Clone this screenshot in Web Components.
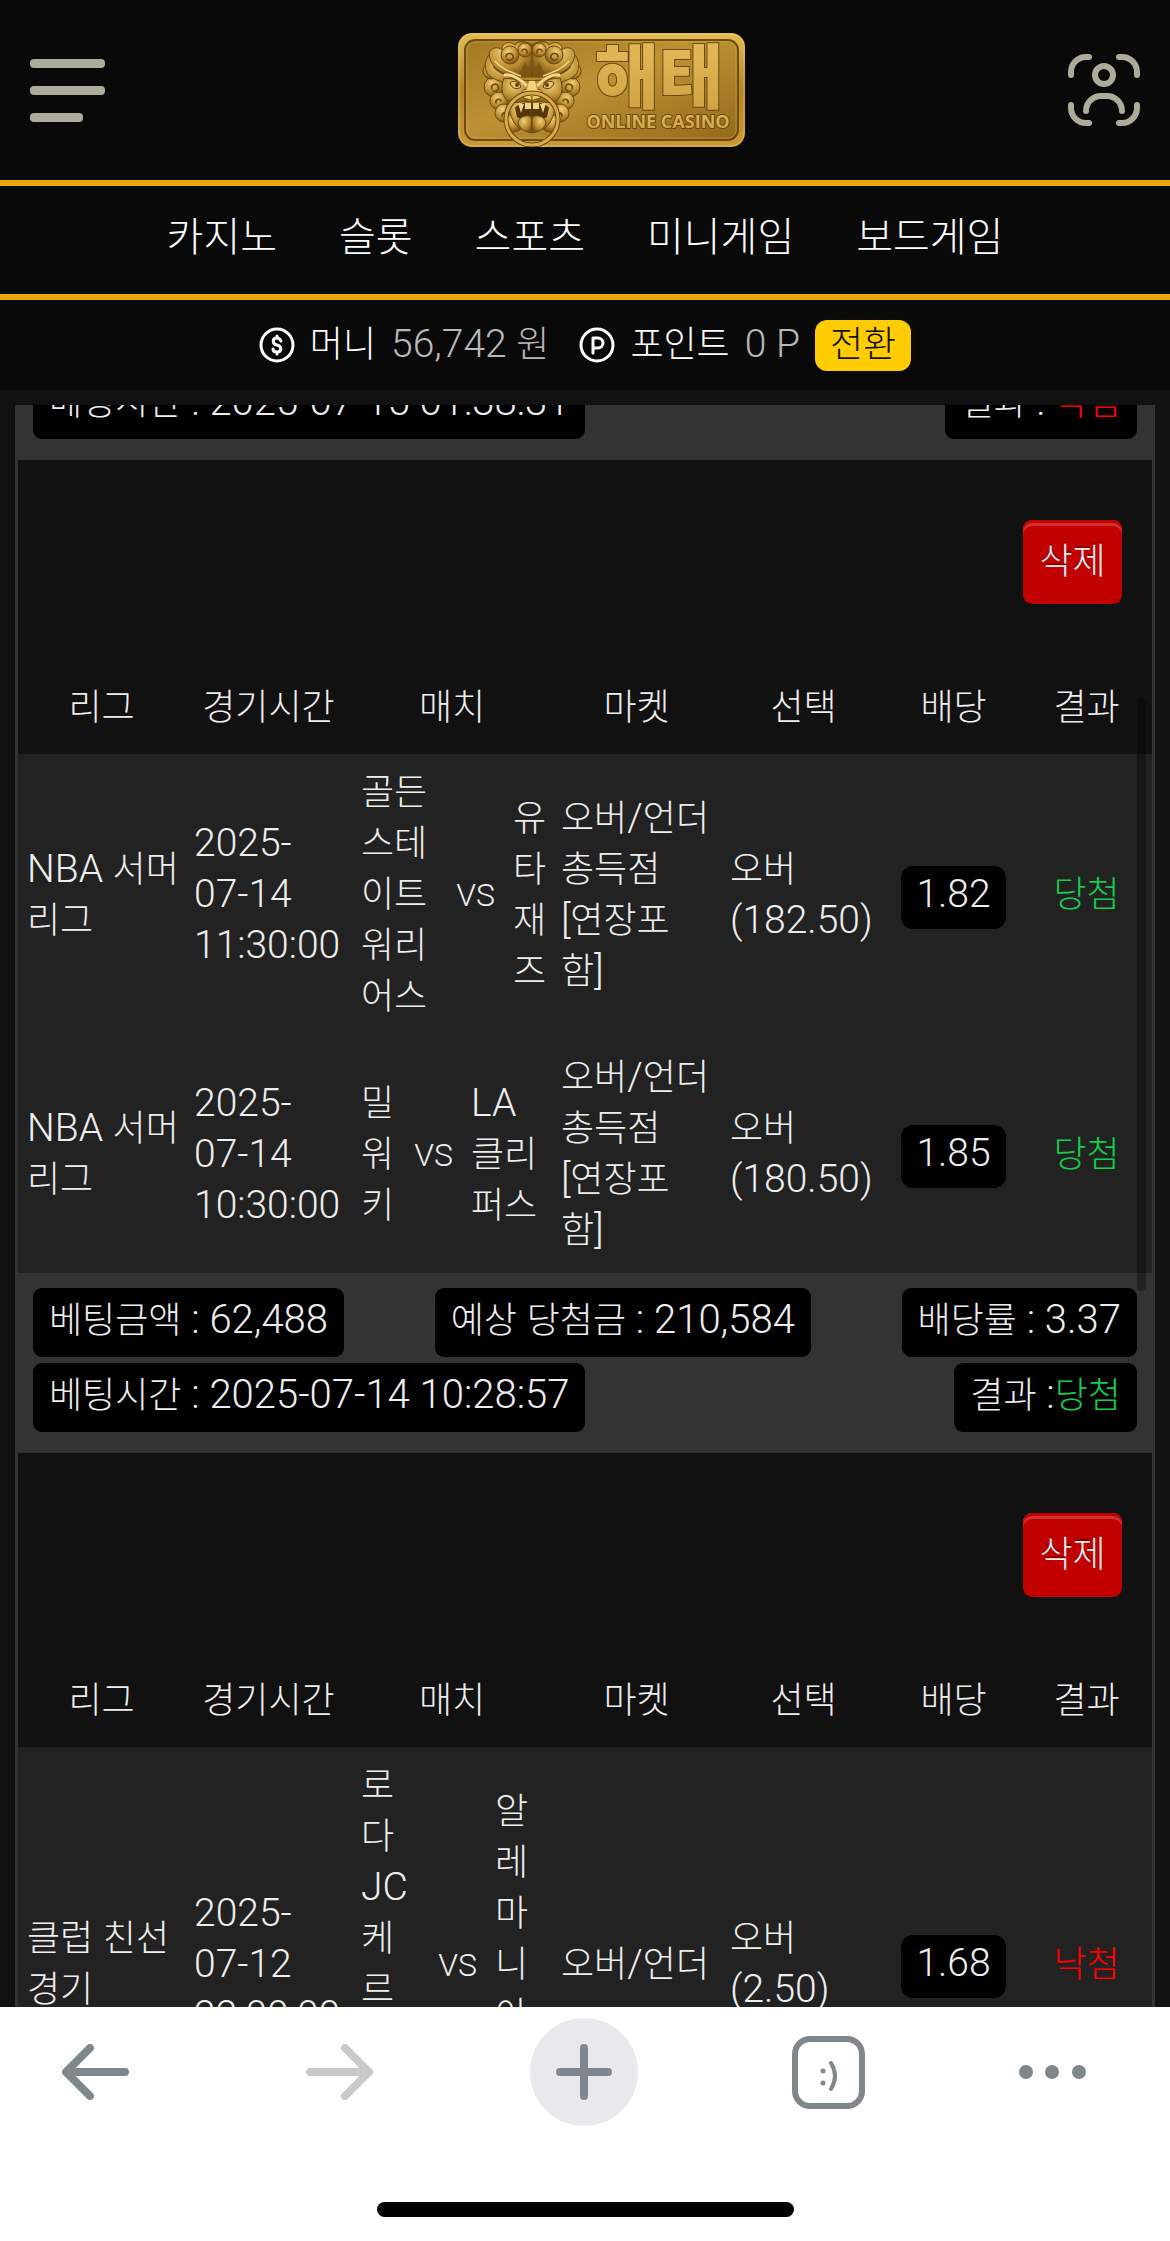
<!DOCTYPE html>
<html lang="ko">
<head>
<meta charset="utf-8">
<meta name="viewport" content="width=device-width, initial-scale=1">
<title>해태 - 베팅내역</title>
<style>
  html, body {
    height: 100%;
  }
  body {
    margin: 0;
    background: #111;
    color: #fff;
    font: 300 36px/51px Roboto, "Noto Sans CJK KR", sans-serif;
  }
</style>
</head>
<body>
<bet-app></bet-app>

<script>
/* eslint-env browser */
const BETS = [
  {
    stub: true,
    time: '2025-07-15 01:38:31',
    result: '낙첨',
    separator: ' : ',
  },
  {
    amount: '62,488',
    payout: '210,584',
    odds: '3.37',
    time: '2025-07-14 10:28:57',
    result: '당첨',
    separator: ' :',
    games: [
      {
        league: 'NBA 서머\n리그',
        time: '2025-\n07-14\n11:30:00',
        home: '골든\n스테\n이트\n워리\n어스',
        away: '유\n타\n재\n즈',
        awayWidth: 30,
        market: '오버/언더\n총득점\n[연장포\n함]',
        pick: '오버\n(182.50)',
        odds: '1.82',
        result: '당첨',
      },
      {
        league: 'NBA 서머\n리그',
        time: '2025-\n07-14\n10:30:00',
        home: '밀\n워\n키',
        away: 'LA\n클리\n퍼스',
        awayWidth: 72,
        market: '오버/언더\n총득점\n[연장포\n함]',
        pick: '오버\n(180.50)',
        odds: '1.85',
        result: '당첨',
      },
    ],
  },
  {
    games: [
      {
        league: '클럽 친선\n경기',
        time: '2025-\n07-12\n22:00:00',
        home: '로\n다\nJC\n케\n르\n크\n라\n데',
        away: '알\n레\n마\n니\n아\n아\n헨',
        awayWidth: 48,
        market: '오버/언더',
        pick: '오버\n(2.50)',
        odds: '1.68',
        result: '낙첨',
      },
    ],
  },
];

// Latin letters and digits are set a little larger than the Hangul.
const mix = (text) => text.replace(/[ -~]+/g, '<span class="latin">$&</span>');

const BASE = `
  * {
    box-sizing: border-box;
  }
  button {
    border: 0;
    padding: 0;
    background: none;
    color: inherit;
    font: inherit;
  }
  svg {
    display: block;
  }
  .latin {
    font-size: 39px;
    line-height: 1;
    white-space: pre;
  }
  .win {
    color: #13ce4b;
  }
  .lose {
    color: #f00;
  }`;

const resultClass = (result) => result === '당첨' ? 'win' : 'lose';

window.customElements.define('brand-logo', class extends HTMLElement {
  connectedCallback() {
    this.attachShadow({mode: 'open'}).innerHTML = `
      <style>
        :host {
          display: block;
        }
        svg {
          display: block;
        }
      </style>
      <svg width="287" height="114" viewBox="0 0 287 114" role="img">
        <defs>
          <linearGradient id="rim" x1="0" y1="0" x2="0" y2="1">
            <stop offset="0" stop-color="#e3bc55"/>
            <stop offset=".5" stop-color="#b28529"/>
            <stop offset="1" stop-color="#c99a35"/>
          </linearGradient>
          <linearGradient id="plate" x1="0" y1="0" x2="1" y2="1">
            <stop offset="0" stop-color="#a37a22"/>
            <stop offset=".45" stop-color="#bd9134"/>
            <stop offset="1" stop-color="#94691c"/>
          </linearGradient>
          <radialGradient id="curl" cx=".4" cy=".3" r=".7">
            <stop offset="0" stop-color="#efd078"/>
            <stop offset=".6" stop-color="#bd8e32"/>
            <stop offset="1" stop-color="#7d5514"/>
          </radialGradient>
          <linearGradient id="letter" x1="0" y1="0" x2="0" y2="1">
            <stop offset="0" stop-color="#e6bf5f"/>
            <stop offset="1" stop-color="#cf9f40"/>
          </linearGradient>
          <g id="half">
            <g fill="url(#curl)" stroke="#6e490f" stroke-width="1">
              <circle cx="-38" cy="54" r="10"/>
              <circle cx="-33" cy="68" r="9"/>
              <circle cx="-28" cy="80" r="9"/>
              <circle cx="-18" cy="90" r="9"/>
              <circle cx="-41" cy="38" r="8"/>
              <path d="M-43 22c1-8 9-9 13-5-1-7 8-10 13-5 2-5 12-4 17 0v32h-38c-6-6-8-14-5-22z"/>
              <circle cx="-22" cy="22" r="9"/>
              <circle cx="-7" cy="17" r="7"/>
              <path d="M-43 22c2 10 8 16 16 19 8 2 14 5 18 12l-9 3c-8-8-22-8-27-16-3-6-2-13 2-18z"/>
              <path d="M-28 45c-4 10-2 20 6 24l12 2 10-8V48z"/>
              <path d="M-22 70c-2 8 2 20 10 26H0V68z"/>
            </g>
            <g fill="none" stroke="#704b10" stroke-width="1.600" stroke-linecap="round">
              <path d="M-26 24c0-4 6-5 7-1s-4 5-6 3"/>
              <path d="M-40 56c-2-4 4-7 6-3s-2 6-5 5"/>
              <path d="M-36 70c-1-4 4-5 5-2M-30 83c0-4 5-4 6-1"/>
              <path d="M-10 18c1-3 6-2 5 2M-38 34c6 8 18 8 26 16"/>
            </g>
            <path d="M-37 28c6 8 16 11 26 15" fill="none" stroke="#f1d485" stroke-width="1.500"/>
            <path d="M-10 36a4 4 0 1 0 6 0l-3-7z" fill="#7c5515"/>
            <path d="M-27 42c7-1 14 3 21 10" fill="none" stroke="#f4d98c" stroke-width="3" stroke-linecap="round"/>
            <path d="M-22 50c3-3 9-2 11 4-4 3-9 2-11-4z" fill="#e7c469" stroke="#5b3a09"/>
            <circle cx="-15" cy="52" r="2" fill="#674310"/>
            <path d="M0 58c-4-3-11-2-11 4 3 5 7 3 11 6z" fill="#e9c66c" stroke="#79520f"/>
            <path d="M0 70c-8-1-14 1-17 5l2 9c4 3 10 4 15 4z" fill="#57370a"/>
            <path d="M-14 70l3 10 3-9zM-7 70h6v6h-6z" fill="#efd382"/>
            <path d="M0 84c-6-3-13 0-14 6 2 7 8 9 14 10z" fill="url(#curl)" stroke="#6e490f"/>
          </g>
        </defs>
        <rect width="287" height="114" rx="14" fill="url(#rim)"/>
        <rect x="1" y="1" width="285" height="112" rx="13" fill="none" stroke="#f0cf77" stroke-opacity=".6"/>
        <rect x="7" y="7" width="273" height="100" rx="10" fill="url(#plate)" stroke="#6f4b10" stroke-width="2"/>
        <rect x="9" y="9" width="269" height="96" rx="8" fill="none" stroke="#d9b04c" stroke-opacity=".5"/>
        <g transform="translate(74 0)">
          <use href="#half"/>
          <use href="#half" transform="scale(-1 1)"/>
          <path d="M-2 28h4l-1 10h-2z" fill="#7c5515"/>
          <path d="M-3 48h6l3 12c-3 4-9 4-12 0z" fill="#f2d580"/>
          <circle cy="86" r="26" fill="none" stroke="#6b470d" stroke-width="5"/>
          <circle cy="86" r="26" fill="none" stroke="#d8ac49" stroke-width="3"/>
        </g>
        <text x="201" y="70" font-family="'Noto Sans CJK KR', sans-serif" font-weight="900" font-size="70" text-anchor="middle" fill="url(#letter)" stroke="#6b480f" stroke-width="2" paint-order="stroke">해태</text>
        <text x="200" y="95" font-family="'Open Sans', sans-serif" font-weight="700" font-size="18" text-anchor="middle" fill="url(#letter)" stroke="#6b480f" stroke-width="2" paint-order="stroke">ONLINE CASINO</text>
      </svg>`;
  }
});

window.customElements.define('site-header', class extends HTMLElement {
  connectedCallback() {
    this.attachShadow({mode: 'open'}).innerHTML = `
      <style>
        ${BASE}
        :host {
          display: flex;
          align-items: center;
          justify-content: space-between;
          height: 180px;
          padding: 0 30px;
          background: #090909;
          border-bottom: 6px solid #e5a80a;
        }
        .menu {
          width: 105px;
        }
      </style>
      <button class="menu" aria-label="메뉴">
        <svg width="75" height="63" fill="#adab9a">
          <rect width="75" height="9" rx="4"/>
          <rect y="27" width="75" height="9" rx="4"/>
          <rect y="54" width="53" height="9" rx="4"/>
        </svg>
      </button>
      <a href="#"><brand-logo></brand-logo></a>
      <button aria-label="내 정보">
        <svg width="72" height="72" fill="none" stroke="#adab9a" stroke-width="6" stroke-linecap="round">
          <path d="M3 21v-3A15 15 0 0 1 18 3h3M51 3h3a15 15 0 0 1 15 15v3M69 51v3a15 15 0 0 1-15 15h-3M21 69h-3A15 15 0 0 1 3 54v-3"/>
          <circle cx="36" cy="21" r="9"/>
          <path d="M18 57a15 15 0 0 1 15-15h6a15 15 0 0 1 15 15"/>
        </svg>
      </button>`;
  }
});

window.customElements.define('game-nav', class extends HTMLElement {
  connectedCallback() {
    const items = ['카지노', '슬롯', '스포츠', '미니게임', '보드게임'];
    this.attachShadow({mode: 'open'}).innerHTML = `
      <style>
        ${BASE}
        :host {
          display: block;
          background: #090909;
          border-bottom: 6px solid #e5a80a;
        }
        nav {
          display: flex;
          align-items: center;
          justify-content: center;
          gap: 62px;
          height: 108px;
          padding-bottom: 6px;
          font-size: 40px;
        }
        a {
          color: inherit;
          text-decoration: none;
        }
      </style>
      <nav>${items.map((item) => `<a href="#">${item}</a>`).join('')}</nav>`;
  }
});

window.customElements.define('wallet-bar', class extends HTMLElement {
  connectedCallback() {
    const ring = `<svg width="36" height="36" viewBox="0 0 36 36" fill="none"
        stroke="#fff" stroke-width="3" stroke-linecap="round" stroke-linejoin="round">
      <circle cx="18" cy="18" r="16"/>`;
    this.attachShadow({mode: 'open'}).innerHTML = `
      <style>
        ${BASE}
        :host {
          display: flex;
          align-items: center;
          justify-content: center;
          gap: 30px;
          height: 90px;
          background: #090909;
        }
        div {
          display: flex;
          align-items: center;
          gap: 15px;
        }
        .amount {
          color: #b9b9b9;
        }
        button {
          height: 51px;
          padding: 0 15px;
          border-radius: 12px;
          background: #fc0;
          color: #111;
          line-height: 45px;
        }
      </style>
      <div>
        ${ring}<path d="M22 14c-1-2-2-3-4-3-5 0-5 6 0 7s5 7 0 7c-2 0-4-1-4-3M18 9v2M18 25v2"/></svg>
        <span>머니</span>
        <span class="amount">${mix('56,742 ')}원</span>
      </div>
      <div>
        ${ring}<path d="M14 26V11h5a5 5 0 0 1 0 10h-5"/></svg>
        <span>포인트</span>
        <span class="amount">${mix('0 P')}</span>
        <button>전환</button>
      </div>`;
  }
});

window.customElements.define('info-pill', class extends HTMLElement {
  connectedCallback() {
    this.attachShadow({mode: 'open'}).innerHTML = `
      <style>
        :host {
          display: block;
          padding: 8px 16px 10px;
          border-radius: 9px;
          background: #000;
          white-space: nowrap;
        }
      </style>
      <slot></slot>`;
  }
});

window.customElements.define('bet-card', class extends HTMLElement {
  connectedCallback() {
    const {bet} = this;
    this.attachShadow({mode: 'open'}).innerHTML = `
      <style>
        ${BASE}
        :host {
          display: block;
        }
        .actions {
          display: flex;
          justify-content: flex-end;
          padding: 60px 30px;
        }
        .delete {
          width: 99px;
          height: 84px;
          border-radius: 9px;
          background: #c30000;
          box-shadow: inset 0 3px #c30000, inset 0 6px #ce3333;
          text-shadow: 0 -2px #800000;
        }
        table {
          width: 100%;
          table-layout: fixed;
          border-collapse: collapse;
        }
        th {
          height: 90px;
          padding: 0 0 2px;
          font-weight: inherit;
        }
        td {
          padding: 14px 9px 16px;
          background: #222;
          white-space: pre;
          vertical-align: middle;
        }
        .match {
          display: flex;
          align-items: center;
          gap: 18px;
        }
        .home {
          flex: 1;
        }
        .vs {
          font-size: 32px;
        }
        .center {
          text-align: center;
        }
        .odds {
          display: inline-block;
          margin-top: 3px;
          padding: 4px 15px 8px;
          border-radius: 12px;
          background: #000;
        }
        footer {
          display: grid;
          gap: 6px;
          padding: 15px 15px 21px;
          background: #333;
        }
        footer div {
          display: flex;
          justify-content: space-between;
        }
        footer .latin {
          font-size: 40px;
        }
      </style>
      ${bet.games ? this._table(bet) : ''}
      ${bet.time ? this._summary(bet) : ''}`;
  }

  _table({games}) {
    return `
      <div class="actions"><button class="delete">삭제</button></div>
      <table>
        <colgroup>
          <col width="167"><col width="167"><col width="200"><col width="169">
          <col width="165"><col width="135"><col width="131">
        </colgroup>
        <thead>
          <tr>
            <th>리그</th><th>경기시간</th><th>매치</th><th>마켓</th>
            <th>선택</th><th>배당</th><th>결과</th>
          </tr>
        </thead>
        <tbody>${games.map((game) => `
          <tr>
            <td>${mix(game.league)}</td>
            <td>${mix(game.time)}</td>
            <td><div class="match"><span class="home">${mix(game.home)}</span><span class="vs">VS</span><span style="width: ${game.awayWidth}px">${mix(game.away)}</span></div></td>
            <td>${mix(game.market)}</td>
            <td>${mix(game.pick)}</td>
            <td class="center"><span class="odds">${mix(game.odds)}</span></td>
            <td class="center ${resultClass(game.result)}">${game.result}</td>
          </tr>`).join('')}
        </tbody>
      </table>`;
  }

  _summary(bet) {
    return `
      <footer>
        ${bet.stub ? '' : `<div>
          <info-pill>베팅금액${mix(` : ${bet.amount}`)}</info-pill>
          <info-pill>예상${mix(' ')}당첨금${mix(` : ${bet.payout}`)}</info-pill>
          <info-pill>배당률${mix(` : ${bet.odds}`)}</info-pill>
        </div>`}
        <div>
          <info-pill>베팅시간${mix(` : ${bet.time}`)}</info-pill>
          <info-pill>결과${mix(bet.separator)}<span class="${resultClass(bet.result)}">${bet.result}</span></info-pill>
        </div>
      </footer>`;
  }
});

window.customElements.define('bet-list', class extends HTMLElement {
  connectedCallback() {
    this.attachShadow({mode: 'open'}).innerHTML = `
      <style>
        ${BASE}
        :host {
          display: block;
          position: relative;
          min-height: 0;
          margin: 15px 15px 0;
          border: solid #333;
          border-width: 0 3px;
          color: #eee;
        }
        .scroller {
          height: 100%;
          overflow: auto;
          scrollbar-width: none;
        }
        .thumb {
          position: absolute;
          top: 293px;
          right: 6px;
          width: 9px;
          height: 37%;
          border-radius: 5px;
          background: rgba(0, 0, 0, .35);
        }
      </style>
      <div class="scroller"></div>
      <div class="thumb"></div>`;
    const scroller = this.shadowRoot.querySelector('.scroller');
    BETS.forEach((bet) => {
      const card = document.createElement('bet-card');
      card.bet = bet;
      scroller.append(card);
    });
    this.scroller = scroller;
  }
});

window.customElements.define('browser-bar', class extends HTMLElement {
  connectedCallback() {
    this.attachShadow({mode: 'open'}).innerHTML = `
      <style>
        ${BASE}
        :host {
          display: block;
          padding: 11px 0 24px;
          background: #fff;
        }
        div {
          display: flex;
          justify-content: space-between;
          padding: 0 84px 0 41px;
        }
        button {
          display: grid;
          place-items: center;
          width: 108px;
          height: 108px;
          border-radius: 54px;
        }
        .new {
          background: #e8e9ed;
        }
        .more {
          width: 67px;
        }
        .home-line {
          width: 417px;
          height: 15px;
          margin: 76px auto 0;
          border-radius: 8px;
          background: #000;
        }
        svg {
          fill: none;
          stroke: #80878a;
          stroke-width: 8px;
          stroke-linecap: round;
          stroke-linejoin: round;
        }
      </style>
      <div>
        <button aria-label="뒤로"><svg width="67" height="56"><path d="M63 28H5M28 4L4 28l24 24"/></svg></button>
        <button aria-label="앞으로" disabled><svg width="67" height="56" style="stroke: #c9c9c9"><path d="M4 28h58M39 4l24 24-24 24"/></svg></button>
        <button class="new" aria-label="새 탭"><svg width="56" height="56" style="stroke: #80868f"><path d="M4 28h48M28 4v48"/></svg></button>
        <button aria-label="탭">
          <svg width="73" height="73">
            <rect x="3" y="3" width="67" height="67" rx="15" style="stroke-width: 6px"/>
            <path d="M39 27q8 13 0 26" style="stroke-width: 4px"/>
            <path d="M31 35h0M31 47h0" style="stroke-width: 5px"/>
          </svg>
        </button>
        <button class="more" aria-label="더보기">
          <svg width="67" height="14"><path d="M7 7h0M33 7h0M60 7h0" style="stroke-width: 14px"/></svg>
        </button>
      </div>
      <p class="home-line"></p>`;
  }
});

window.customElements.define('bet-app', class extends HTMLElement {
  connectedCallback() {
    this.attachShadow({mode: 'open'}).innerHTML = `
      <style>
        :host {
          display: grid;
          grid-template-rows: auto auto auto minmax(0, 1fr) auto;
          height: 100vh;
        }
      </style>
      <site-header></site-header>
      <game-nav></game-nav>
      <wallet-bar></wallet-bar>
      <bet-list></bet-list>
      <browser-bar></browser-bar>`;
    // Open the list part of the way down the first slip.
    this.shadowRoot.querySelector('bet-list').scroller.scrollTop = 50;
  }
});
</script>
</body>
</html>
